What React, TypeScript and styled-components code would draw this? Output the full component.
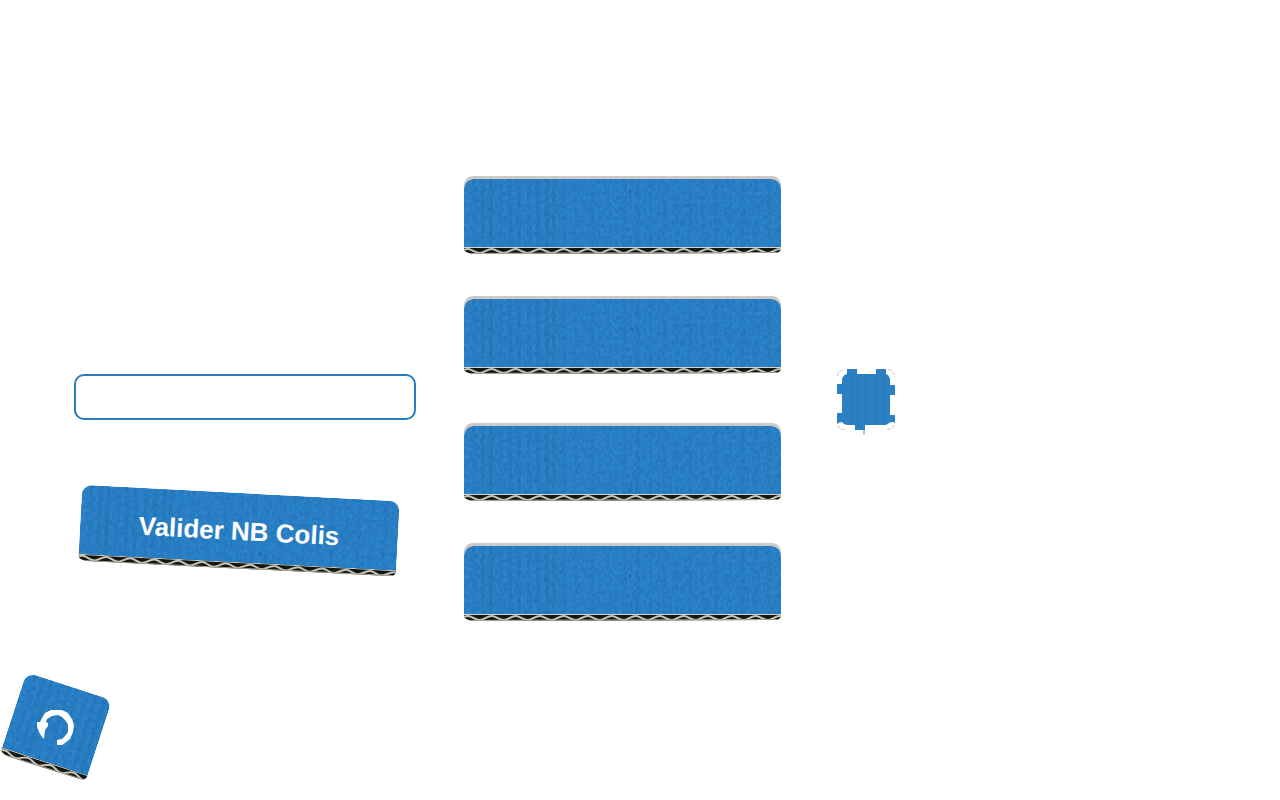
import React from 'react';
import styled, { createGlobalStyle } from 'styled-components';

const GlobalStyle = createGlobalStyle`
  *, *::before, *::after { box-sizing: border-box; }
  body { margin: 0; background: #fff; font-family: "Liberation Sans", Arial, sans-serif; }
`;

const Page = styled.div`
  display: flex;
  flex-direction: column;
  gap: 53px;
  padding-top: 176px;
  overflow-x: hidden;
`;

const Columns = styled.main`
  display: grid;
  grid-template-columns: minmax(0, 342px) minmax(0, 317px) auto;
  justify-content: start;
  column-gap: 48px;
  padding-left: 74px;
`;

const EntryForm = styled.form`
  display: flex;
  flex-direction: column;
  gap: 73px;
  padding-top: 198px;
`;

const CountInput = styled.input`
  width: 100%;
  height: 46px;
  padding: 0 12px;
  border: 2px solid #2a7dbb;
  border-radius: 10px;
  background: #fff;
  font: 20px "Liberation Sans", Arial, sans-serif;
  outline: none;
`;

const CardList = styled.div`
  display: flex;
  flex-direction: column;
  gap: 49px;
`;

const CardPair = styled.div`
  display: flex;
  flex-direction: column;
  gap: 42px;
`;

const PlainButton = styled.button`
  display: grid;
  padding: 0;
  border: 0;
  background: none;
  cursor: pointer;

  > * { grid-area: 1 / 1; }
  svg { display: block; width: 100%; overflow: visible; }
`;

const CardButton = styled(PlainButton)`
  width: 100%;
  height: 78px;
`;

const SubmitButton = styled(PlainButton)`
  width: calc(100% - 24px);
  height: 76px;
  margin-left: 6px;
  align-items: center;
  transform: rotate(3deg);
`;

const SubmitLabel = styled.span`
  z-index: 1;
  color: #fff;
  font: bold 26px/32px "Liberation Sans", Arial, sans-serif;
  text-align: center;
  white-space: nowrap;
`;

const StampButton = styled(PlainButton)`
  width: 58px;
  height: 66px;
  margin: 193px 0 0 8px;
`;

const Footer = styled.footer`
  display: flex;
  padding: 0 0 16px 2px;
`;

const ResetButton = styled(PlainButton)`
  width: 108px;
  height: 106px;
`;

/* Darker flutes showing through the paint: [x, opacity]. */
const ridges = [
  [8, 0.08], [17, 0.14], [25, 0.16], [35, 0.08], [44, 0.12], [53, 0.1], [63, 0.08], [72, 0.15],
  [81, 0.16], [88, 0.1], [97, 0.06], [110, 0.05], [126, 0.08], [143, 0.05], [159, 0.07],
  [172, 0.1], [185, 0.05], [198, 0.08], [211, 0.06], [224, 0.09], [237, 0.06], [250, 0.1],
  [263, 0.06], [277, 0.1], [290, 0.06], [303, 0.08],
];

function wavePath(width: number, low: number, high: number, half: number, start: number) {
  let d = `M${start} ${low}`;
  let up = true;
  for (let x = start; x < width; x += half) {
    const from = up ? low : high;
    const to = up ? high : low;
    d += ` C${x + 4} ${from} ${x + half - 5} ${to} ${x + half} ${to}`;
    up = !up;
  }
  return d;
}

interface BoardProps {
  id: string;
  width: number;
  height: number;
  lip?: boolean;
  speck?: [number, number];
}

/* A cut piece of corrugated board: painted face above the fluted edge. */
function Board({ id, width, height, lip, speck }: BoardProps) {
  const top = lip ? 3 : 0;
  const edge = height - 6;
  const r = 10;
  return (
    <g>
      <defs>
        <clipPath id={`${id}-face`}>
          <path
            d={`M0 ${top + r}Q1 ${top + 1} ${r} ${top}H${width - r}Q${width - 1} ${top + 1} ${width} ${top + r}V${edge}H0Z`}
          />
        </clipPath>
        <clipPath id={`${id}-edge`}>
          <path
            d={`M0 ${edge - 1}H${width}V${height - 5}Q${width - 1} ${height - 1} ${width - 6} ${height - 1}L10 ${height}Q2 ${height - 1} 0 ${height - 4}Z`}
          />
        </clipPath>
        <filter id={`${id}-grain`} x="0" y="0" width="100%" height="100%" colorInterpolationFilters="sRGB">
          <feTurbulence type="fractalNoise" baseFrequency="0.35 0.25" numOctaves="3" seed="4" />
          <feColorMatrix values="0 0 0 0 0.08  0 0 0 0 0.36  0 0 0 0 0.64  0.9 0 0 0 -0.32" />
        </filter>
      </defs>
      {lip && (
        <path d={`M0 14V7Q2 1 8 0H${width - 8}Q${width - 2} 1 ${width} 7V14Z`} fill="#cbcac8" />
      )}
      <g clipPath={`url(#${id}-face)`}>
        <rect width={width} height={height} fill="#2c84c9" />
        {ridges.map(([x, o]) => (
          <rect key={x} x={x} width="4" height={height} fill="#15558e" opacity={o} />
        ))}
        <rect width={width} height={height} filter={`url(#${id}-grain)`} />
        {speck && <rect x={speck[0]} y={speck[1]} width="2" height="2" fill="#1b5f9c" />}
      </g>
      <g clipPath={`url(#${id}-edge)`}>
        <rect y={edge - 1} width={width} height="8" fill="#17150f" />
        <path
          d={wavePath(width + 30, edge + 5, edge + 1, 12, -8)}
          fill="none"
          stroke="#c5c4b8"
          strokeWidth="2"
        />
        <rect y={edge - 1} width={width} height="1" fill="#d3d4cd" />
        <path d={`M0 ${height}L${width} ${height - 1}`} stroke="#a3a195" strokeWidth="2" />
      </g>
    </g>
  );
}

function Card({ id, speck }: { id: string; speck: [number, number] }) {
  return (
    <CardButton type="button" aria-label="Choix">
      <svg viewBox="0 0 317 78" height="78" preserveAspectRatio="none" aria-hidden="true">
        <Board id={id} width={317} height={78} lip speck={speck} />
      </svg>
    </CardButton>
  );
}

function Stamp() {
  return (
    <StampButton type="button" aria-label="Option">
      <svg viewBox="0 0 58 66" height="66" aria-hidden="true">
        <path
          fill="#2a80c2"
          d="M10 0H20V5H39V0H49V5Q52 6 53 10V16H58V26H53V46H58V54Q55 52 52 54Q50 56 48 56H28V61H18V56H11Q7 56 5 53Q2 53 0 55V44H5V25H0V15H5V10Q6 6 10 5Z"
        />
        <g fill="#1c66a5" opacity="0.1">
          <rect x="13" y="6" width="3" height="49" />
          <rect x="20" y="6" width="3" height="54" />
          <rect x="28" y="6" width="3" height="49" />
          <rect x="38" y="6" width="3" height="49" />
          <rect x="46" y="6" width="3" height="49" />
        </g>
        <path
          fill="none"
          stroke="#c9c9c9"
          strokeDasharray="4 1"
          d="M0.5 7Q1 1 8 0.5M51 0.5Q57 1 57.5 8M0.5 56Q2 60 8 60.5M50 60.5Q55 60 57.5 56"
        />
        <rect x="26" y="61" width="2" height="5" fill="#c4c4c4" />
      </svg>
    </StampButton>
  );
}

function Reset() {
  return (
    <ResetButton type="button" aria-label="Recommencer">
      <svg viewBox="0 0 108 106" height="106" aria-hidden="true">
        <g transform="translate(54 53) rotate(18) translate(-45 -43)">
          <Board id="reset" width={90} height={86} />
        </g>
        <path
          fill="#fff"
          d="M35 48H38L40 44L43 39L49 36H60L66 39L70 45L72 51L71 58L68 65L63 69L60 71H55V66L60 65L63 62L66 58V51L64 47L60 43L56 41L50 42L45 45L44 48L46 49V52L43 56L42 65L40 63L37 58L35 53Z"
        />
      </svg>
    </ResetButton>
  );
}

export default function App() {
  return (
    <>
      <GlobalStyle />
      <Page>
        <Columns>
          <EntryForm onSubmit={(e: React.FormEvent) => e.preventDefault()}>
            <CountInput type="text" aria-label="NB Colis" />
            <SubmitButton type="submit">
              <svg viewBox="0 0 318 76" height="76" preserveAspectRatio="none" aria-hidden="true">
                <Board id="submit" width={318} height={76} speck={[181, 59]} />
              </svg>
              <SubmitLabel>Valider NB Colis</SubmitLabel>
            </SubmitButton>
          </EntryForm>
          <CardList>
            <CardPair>
              <Card id="card-1" speck={[165, 15]} />
              <Card id="card-2" speck={[167, 32]} />
            </CardPair>
            <CardPair>
              <Card id="card-3" speck={[165, 67]} />
              <Card id="card-4" speck={[165, 32]} />
            </CardPair>
          </CardList>
          <Stamp />
        </Columns>
        <Footer>
          <Reset />
        </Footer>
      </Page>
    </>
  );
}
